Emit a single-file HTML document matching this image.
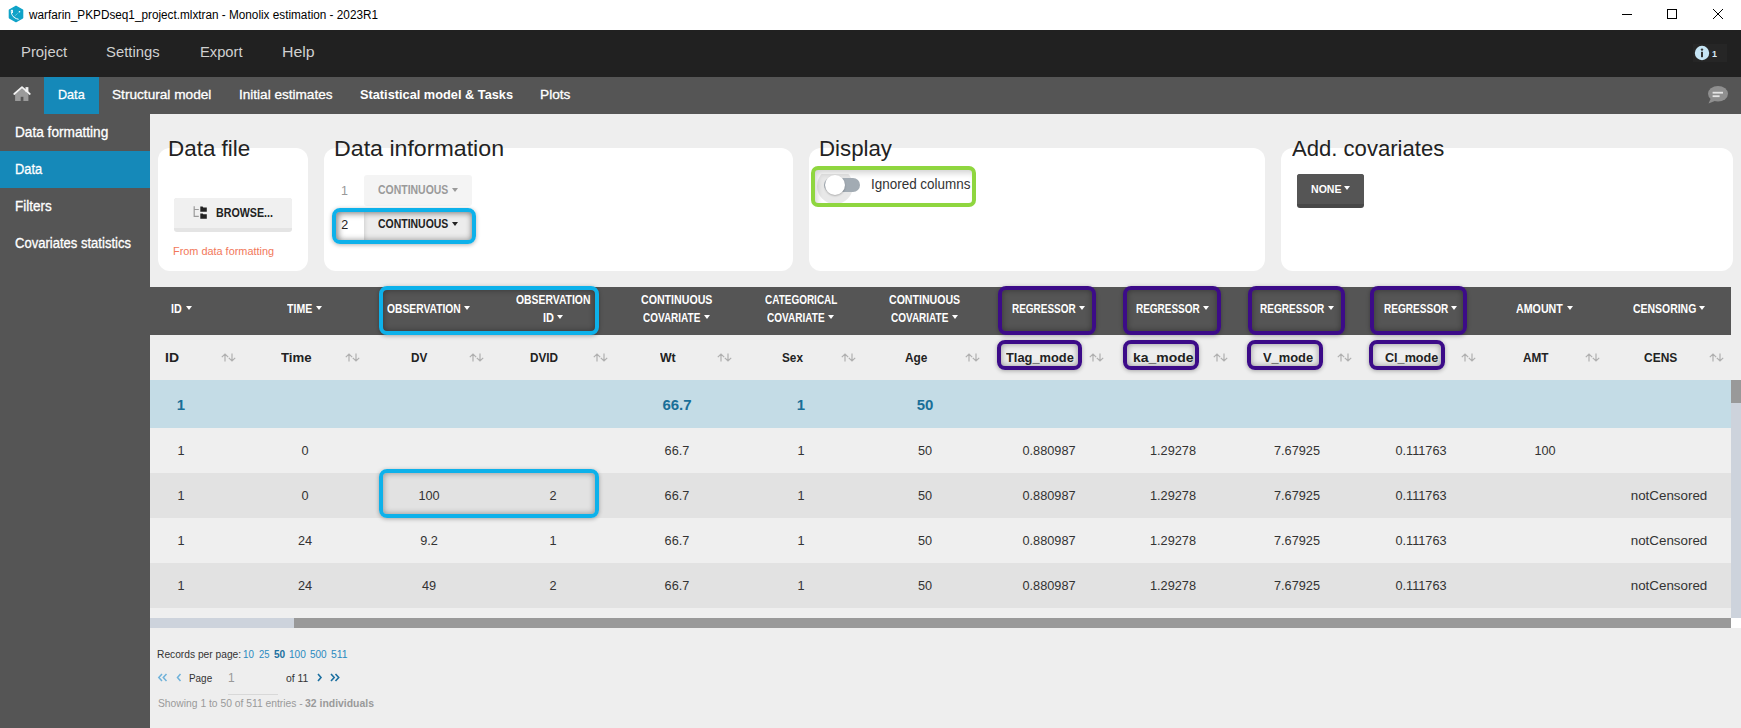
<!DOCTYPE html>
<html><head><meta charset="utf-8">
<style>
*{margin:0;padding:0;box-sizing:border-box}
html,body{width:1741px;height:728px;overflow:hidden;background:#eeeeee;font-family:"Liberation Sans",sans-serif}
.a{position:absolute}
.t{position:absolute;white-space:nowrap;line-height:1;transform-origin:0 0}
.card{position:absolute;background:#fff;border-radius:12px}
.car{position:absolute;width:0;height:0;border-left:3.5px solid transparent;border-right:3.5px solid transparent;border-top:4px solid #fff}
.sort{position:absolute;width:15px;height:9px}
.bx{position:absolute;border-radius:8px}
</style></head><body>
<!-- title bar -->
<div class="a" style="left:0;top:0;width:1741px;height:30px;background:#fff"></div>
<svg class="a" style="left:8px;top:5px" width="17" height="18" viewBox="0 0 17 18">
 <polygon points="8,1.3 14.6,5 14.6,12.8 8,16.6 1.4,12.8 1.4,5" fill="#10a3c8" stroke="#10a3c8" stroke-width="1.4" stroke-linejoin="round"/>
 <path d="M3.3,5.3 C3,9 4.6,13 10.6,14.3" stroke="#fff" stroke-width="1" fill="none"/>
 <path d="M3.1,5.5 L4.3,5 L4.5,8" stroke="#fff" stroke-width="1" fill="none"/>
 <path d="M5.6,12.2 L10.8,7.3" stroke="#d5f0f8" stroke-width="0.6" stroke-dasharray="1,0.8" fill="none"/>
 <circle cx="11.5" cy="6.7" r="0.8" fill="#fff"/>
</svg>
<div class="a" style="left:1622px;top:14px;width:10px;height:1px;background:#000"></div>
<div class="a" style="left:1667px;top:9px;width:10px;height:10px;border:1px solid #000"></div>
<svg class="a" style="left:1712px;top:8px" width="12" height="12" viewBox="0 0 12 12"><path d="M1,1 L11,11 M11,1 L1,11" stroke="#000" stroke-width="1"/></svg>

<!-- menu -->
<div class="a" style="left:0;top:30px;width:1741px;height:47px;background:#212121"></div>
<div class="a" style="left:1693px;top:44px;width:34px;height:18px;background:#262626"></div>
<svg class="a" style="left:1694px;top:45px" width="16" height="16" viewBox="0 0 16 16">
 <circle cx="8" cy="8" r="7.2" fill="#c6e5f5"/>
 <circle cx="8" cy="4.6" r="1.2" fill="#333"/>
 <rect x="7" y="6.8" width="2" height="5.4" fill="#333"/>
</svg>

<!-- tabs -->
<div class="a" style="left:0;top:77px;width:1741px;height:37px;background:#555555"></div>
<div class="a" style="left:44px;top:77px;width:55px;height:37px;background:#1589b9"></div>
<svg class="a" style="left:13px;top:86px" width="18" height="16" viewBox="0 0 18 16">
 <polygon points="2.1,8 9,1.6 15.4,8 15.4,14.9 2.1,14.9" fill="#9a9a9a"/>
 <rect x="7.7" y="10.8" width="2.7" height="4.1" fill="#555"/>
 <rect x="12.5" y="1.1" width="2.9" height="5" fill="#f0f0f0"/>
 <path d="M1.2,8 L9,1.2 L16.8,8" stroke="#f4f4f4" stroke-width="1.7" fill="none" stroke-linecap="round" stroke-linejoin="round"/>
</svg>
<svg class="a" style="left:1707px;top:85px" width="22" height="20" viewBox="0 0 22 20">
 <ellipse cx="11" cy="8.8" rx="10" ry="7.8" fill="#8f8f8f"/>
 <path d="M4,13 L1.5,18.5 L9,15.5 Z" fill="#8f8f8f"/>
 <rect x="5.6" y="6.8" width="10.4" height="1.8" fill="#e6e6e6"/>
 <rect x="5.6" y="10.3" width="7" height="1.8" fill="#e6e6e6"/>
</svg>

<!-- sidebar -->
<div class="a" style="left:0;top:114px;width:150px;height:614px;background:#555555"></div>
<div class="a" style="left:0;top:151px;width:150px;height:37px;background:#1589b9"></div>

<!-- cards -->
<div class="card" style="left:158px;top:148px;width:150px;height:123px"></div>
<div class="card" style="left:324px;top:148px;width:469px;height:123px"></div>
<div class="card" style="left:809px;top:148px;width:456px;height:123px"></div>
<div class="card" style="left:1281px;top:148px;width:452px;height:123px"></div>

<!-- browse button -->
<div class="a" style="left:174px;top:198px;width:118px;height:34px;background:#e4e4e4;border-radius:3px"></div>
<div class="a" style="left:174px;top:198px;width:118px;height:30px;background:#f0f0f0;border-radius:3px 3px 0 0"></div>
<svg class="a" style="left:192px;top:205px" width="16" height="15" viewBox="0 0 16 15">
 <path d="M2.2,1.2 V11.3 H6.8 M2.2,4.5 H6.8" stroke="#9a9a9a" stroke-width="1.2" fill="none"/>
 <path d="M8.3,1.6 H10.6 L11.3,2.4 H14.8 V6.8 H8.3 Z" fill="#222"/>
 <path d="M8.3,8.4 H10.6 L11.3,9.2 H14.8 V13.7 H8.3 Z" fill="#222"/>
</svg>

<!-- data information dropdowns -->
<div class="a" style="left:364px;top:175px;width:108px;height:31px;background:#f4f4f4;border-radius:3px"></div>
<div class="car" style="left:452px;top:188px;border-top-color:#9a9a9a"></div>
<div class="a" style="left:336px;top:211px;width:136px;height:30px;background:#fff;box-shadow:inset 3px 3px 6px rgba(0,0,0,0.25)"></div>
<div class="a" style="left:364px;top:211px;width:108px;height:30px;background:#ececec;box-shadow:inset 0 3px 5px rgba(0,0,0,0.18)"></div>
<div class="car" style="left:452px;top:222px;border-top-color:#222"></div>


<!-- display toggle -->
<div class="a" style="left:814px;top:169px;width:159px;height:35px;background:#fff;box-shadow:inset 3px 4px 6px rgba(0,0,0,0.18)"></div>
<div class="a" style="left:815px;top:174px;width:60px;height:30px;overflow:hidden"><div class="a" style="left:2px;top:-6px;width:36px;height:36px;border-radius:50%;background:rgba(0,0,0,0.09)"></div></div>
<div class="a" style="left:824px;top:178px;width:36px;height:14px;border-radius:7px;background:#a2abb3"></div>
<div class="a" style="left:825px;top:175px;width:20px;height:20px;border-radius:50%;background:#fff;box-shadow:0 1px 2px rgba(0,0,0,0.25)"></div>
<div class="bx" style="left:811px;top:166px;width:165px;height:41px;border:4px solid #8fd63f;border-radius:7px"></div>

<!-- NONE button -->
<div class="a" style="left:1297px;top:174px;width:67px;height:34px;background:#484848;border-radius:3px"></div>
<div class="a" style="left:1297px;top:174px;width:67px;height:30px;background:#555;border-radius:3px 3px 0 0"></div>
<div class="car" style="left:1344px;top:186px"></div>

<!-- table -->
<div class="a" style="left:150px;top:287px;width:1581px;height:48px;background:#555"></div>
<div class="a" style="left:150px;top:335px;width:1581px;height:45px;background:#eeeeee"></div>
<div class="a" style="left:150px;top:380px;width:1581px;height:48px;background:#c4dce6"></div>
<div class="a" style="left:150px;top:428px;width:1581px;height:45px;background:#efefef"></div>
<div class="a" style="left:150px;top:473px;width:1581px;height:45px;background:#e2e2e2"></div>
<div class="a" style="left:150px;top:518px;width:1581px;height:45px;background:#efefef"></div>
<div class="a" style="left:150px;top:563px;width:1581px;height:45px;background:#e2e2e2"></div>
<div class="a" style="left:150px;top:608px;width:1581px;height:10px;background:#efefef"></div>
<div class="a" style="left:150px;top:618px;width:144px;height:10px;background:#cdd3dc"></div>
<div class="a" style="left:294px;top:618px;width:1437px;height:10px;background:#999"></div>
<div class="a" style="left:1731px;top:380px;width:10px;height:238px;background:#cdd3dc"></div>
<div class="a" style="left:1731px;top:380px;width:10px;height:23px;background:#999"></div>
<div class="a" style="left:1731px;top:618px;width:10px;height:10px;background:#fff"></div>

<div class="car" style="left:185.6px;top:306px"></div>
<div class="car" style="left:316px;top:306px"></div>
<div class="car" style="left:464px;top:306px"></div>
<div class="car" style="left:557.4px;top:315px"></div>
<div class="car" style="left:704.4px;top:315px"></div>
<div class="car" style="left:828px;top:315px"></div>
<div class="car" style="left:952px;top:315px"></div>
<div class="car" style="left:1079px;top:306px"></div>
<div class="car" style="left:1203px;top:306px"></div>
<div class="car" style="left:1327.5px;top:306px"></div>
<div class="car" style="left:1451px;top:306px"></div>
<div class="car" style="left:1567px;top:306px"></div>
<div class="car" style="left:1699px;top:306px"></div>
<svg class="sort" style="left:220.5px;top:353px" viewBox="0 0 15 9"><path d="M4,8.5 V1 M0.8,4.2 L4,1 L7.2,4.2 M11,0.5 V8 M7.8,4.8 L11,8 L14.2,4.8" stroke="#b0b0b0" stroke-width="1.2" fill="none"/></svg>
<svg class="sort" style="left:344.5px;top:353px" viewBox="0 0 15 9"><path d="M4,8.5 V1 M0.8,4.2 L4,1 L7.2,4.2 M11,0.5 V8 M7.8,4.8 L11,8 L14.2,4.8" stroke="#b0b0b0" stroke-width="1.2" fill="none"/></svg>
<svg class="sort" style="left:468.5px;top:353px" viewBox="0 0 15 9"><path d="M4,8.5 V1 M0.8,4.2 L4,1 L7.2,4.2 M11,0.5 V8 M7.8,4.8 L11,8 L14.2,4.8" stroke="#b0b0b0" stroke-width="1.2" fill="none"/></svg>
<svg class="sort" style="left:592.5px;top:353px" viewBox="0 0 15 9"><path d="M4,8.5 V1 M0.8,4.2 L4,1 L7.2,4.2 M11,0.5 V8 M7.8,4.8 L11,8 L14.2,4.8" stroke="#b0b0b0" stroke-width="1.2" fill="none"/></svg>
<svg class="sort" style="left:716.5px;top:353px" viewBox="0 0 15 9"><path d="M4,8.5 V1 M0.8,4.2 L4,1 L7.2,4.2 M11,0.5 V8 M7.8,4.8 L11,8 L14.2,4.8" stroke="#b0b0b0" stroke-width="1.2" fill="none"/></svg>
<svg class="sort" style="left:840.5px;top:353px" viewBox="0 0 15 9"><path d="M4,8.5 V1 M0.8,4.2 L4,1 L7.2,4.2 M11,0.5 V8 M7.8,4.8 L11,8 L14.2,4.8" stroke="#b0b0b0" stroke-width="1.2" fill="none"/></svg>
<svg class="sort" style="left:964.5px;top:353px" viewBox="0 0 15 9"><path d="M4,8.5 V1 M0.8,4.2 L4,1 L7.2,4.2 M11,0.5 V8 M7.8,4.8 L11,8 L14.2,4.8" stroke="#b0b0b0" stroke-width="1.2" fill="none"/></svg>
<svg class="sort" style="left:1088.5px;top:353px" viewBox="0 0 15 9"><path d="M4,8.5 V1 M0.8,4.2 L4,1 L7.2,4.2 M11,0.5 V8 M7.8,4.8 L11,8 L14.2,4.8" stroke="#b0b0b0" stroke-width="1.2" fill="none"/></svg>
<svg class="sort" style="left:1212.5px;top:353px" viewBox="0 0 15 9"><path d="M4,8.5 V1 M0.8,4.2 L4,1 L7.2,4.2 M11,0.5 V8 M7.8,4.8 L11,8 L14.2,4.8" stroke="#b0b0b0" stroke-width="1.2" fill="none"/></svg>
<svg class="sort" style="left:1336.5px;top:353px" viewBox="0 0 15 9"><path d="M4,8.5 V1 M0.8,4.2 L4,1 L7.2,4.2 M11,0.5 V8 M7.8,4.8 L11,8 L14.2,4.8" stroke="#b0b0b0" stroke-width="1.2" fill="none"/></svg>
<svg class="sort" style="left:1460.5px;top:353px" viewBox="0 0 15 9"><path d="M4,8.5 V1 M0.8,4.2 L4,1 L7.2,4.2 M11,0.5 V8 M7.8,4.8 L11,8 L14.2,4.8" stroke="#b0b0b0" stroke-width="1.2" fill="none"/></svg>
<svg class="sort" style="left:1584.5px;top:353px" viewBox="0 0 15 9"><path d="M4,8.5 V1 M0.8,4.2 L4,1 L7.2,4.2 M11,0.5 V8 M7.8,4.8 L11,8 L14.2,4.8" stroke="#b0b0b0" stroke-width="1.2" fill="none"/></svg>
<svg class="sort" style="left:1708.5px;top:353px" viewBox="0 0 15 9"><path d="M4,8.5 V1 M0.8,4.2 L4,1 L7.2,4.2 M11,0.5 V8 M7.8,4.8 L11,8 L14.2,4.8" stroke="#b0b0b0" stroke-width="1.2" fill="none"/></svg>
<div class="bx" style="left:332px;top:208px;width:144px;height:36px;border:4px solid #0db1ea;box-shadow:inset 0 0 6px rgba(0,0,0,0.38),0 1px 4px rgba(0,0,0,0.3);"></div>
<div class="bx" style="left:379px;top:286px;width:220px;height:49px;border:4px solid #0db1ea;box-shadow:inset 0 0 6px rgba(0,0,0,0.38),0 1px 4px rgba(0,0,0,0.3);"></div>
<div class="bx" style="left:379px;top:469px;width:220px;height:49px;border:4px solid #0db1ea;box-shadow:inset 0 0 6px rgba(0,0,0,0.38),0 1px 4px rgba(0,0,0,0.3);"></div>
<div class="bx" style="left:998px;top:286px;width:98px;height:49px;border:4px solid #3c0b88;box-shadow:inset 0 0 6px rgba(0,0,0,0.38),0 1px 4px rgba(0,0,0,0.3);"></div>
<div class="bx" style="left:1123px;top:286px;width:98px;height:49px;border:4px solid #3c0b88;box-shadow:inset 0 0 6px rgba(0,0,0,0.38),0 1px 4px rgba(0,0,0,0.3);"></div>
<div class="bx" style="left:1248px;top:286px;width:97px;height:49px;border:4px solid #3c0b88;box-shadow:inset 0 0 6px rgba(0,0,0,0.38),0 1px 4px rgba(0,0,0,0.3);"></div>
<div class="bx" style="left:1370px;top:286px;width:97px;height:49px;border:4px solid #3c0b88;box-shadow:inset 0 0 6px rgba(0,0,0,0.38),0 1px 4px rgba(0,0,0,0.3);"></div>
<div class="bx" style="left:997px;top:340px;width:85px;height:30px;border:4px solid #3c0b88;box-shadow:inset 0 0 6px rgba(0,0,0,0.38),0 1px 4px rgba(0,0,0,0.3);"></div>
<div class="bx" style="left:1123px;top:340px;width:76px;height:30px;border:4px solid #3c0b88;box-shadow:inset 0 0 6px rgba(0,0,0,0.38),0 1px 4px rgba(0,0,0,0.3);"></div>
<div class="bx" style="left:1247px;top:340px;width:76px;height:30px;border:4px solid #3c0b88;box-shadow:inset 0 0 6px rgba(0,0,0,0.38),0 1px 4px rgba(0,0,0,0.3);"></div>
<div class="bx" style="left:1369px;top:340px;width:76px;height:30px;border:4px solid #3c0b88;box-shadow:inset 0 0 6px rgba(0,0,0,0.38),0 1px 4px rgba(0,0,0,0.3);"></div>

<!-- pagination -->
<div class="a" style="left:228px;top:694px;width:50px;height:1px;background:#d8d8d8"></div>
<svg class="a" style="left:157px;top:672px" width="190" height="12" viewBox="0 0 190 12">
 <path d="M5,2 L1.8,5.5 L5,9 M9.5,2 L6.3,5.5 L9.5,9" stroke="#6fb2da" stroke-width="1.5" fill="none"/>
 <path d="M23.5,2 L20.5,5.5 L23.5,9" stroke="#6fb2da" stroke-width="1.5" fill="none"/>
 <path d="M161,2 L164,5.5 L161,9" stroke="#1b6fa0" stroke-width="1.6" fill="none"/>
 <path d="M174,2 L177.2,5.5 L174,9 M178.5,2 L181.7,5.5 L178.5,9" stroke="#1b6fa0" stroke-width="1.6" fill="none"/>
</svg>

<div class="t" style="font-size:12.5px;font-weight:normal;color:#000;top:8.02px;left:29.00px;transform:scaleX(0.9407);margin-top:1.00px">warfarin_PKPDseq1_project.mlxtran - Monolix estimation - 2023R1</div>
<div class="t" style="font-size:15px;font-weight:normal;color:#d0d0d0;top:44.30px;left:20.51px;transform:scaleX(0.9891);margin-top:-0.30px">Project</div>
<div class="t" style="font-size:15px;font-weight:normal;color:#d0d0d0;top:44.30px;left:106.41px;transform:scaleX(0.9887);margin-top:-0.30px">Settings</div>
<div class="t" style="font-size:15px;font-weight:normal;color:#d0d0d0;top:44.30px;left:199.62px;transform:scaleX(0.9814);margin-top:-0.30px">Export</div>
<div class="t" style="font-size:15px;font-weight:normal;color:#d0d0d0;top:44.30px;left:281.94px;transform:scaleX(1.0600);margin-top:-0.30px">Help</div>
<div class="t" style="font-size:13.7px;font-weight:normal;color:#fff;top:87.70px;left:57.68px;transform:scaleX(0.9214);-webkit-text-stroke:0.3px #fff;margin-top:0.33px">Data</div>
<div class="t" style="font-size:13.7px;font-weight:normal;color:#fff;top:87.70px;left:112.30px;transform:scaleX(0.9969);-webkit-text-stroke:0.3px #fff;margin-top:0.33px">Structural model</div>
<div class="t" style="font-size:13.7px;font-weight:normal;color:#fff;top:87.70px;left:238.81px;transform:scaleX(0.9914);-webkit-text-stroke:0.3px #fff;margin-top:0.33px">Initial estimates</div>
<div class="t" style="font-size:13.7px;font-weight:bold;color:#fff;top:87.70px;left:360.00px;transform:scaleX(0.9329);margin-top:0.33px">Statistical model &amp; Tasks</div>
<div class="t" style="font-size:13.7px;font-weight:normal;color:#fff;top:87.70px;left:540.00px;-webkit-text-stroke:0.3px #fff;margin-top:0.33px">Plots</div>
<div class="t" style="font-size:14px;font-weight:normal;color:#fff;top:125.55px;left:15.43px;transform:scaleX(0.9745);-webkit-text-stroke:0.3px #fff;margin-top:-0.55px">Data formatting</div>
<div class="t" style="font-size:14px;font-weight:normal;color:#fff;top:162.55px;left:15.48px;transform:scaleX(0.9172);-webkit-text-stroke:0.3px #fff;margin-top:-0.55px">Data</div>
<div class="t" style="font-size:14px;font-weight:normal;color:#fff;top:199.55px;left:15.44px;transform:scaleX(0.9622);-webkit-text-stroke:0.3px #fff;margin-top:-0.55px">Filters</div>
<div class="t" style="font-size:14px;font-weight:normal;color:#fff;top:236.55px;left:15.47px;transform:scaleX(0.9317);-webkit-text-stroke:0.3px #fff;margin-top:-0.55px">Covariates statistics</div>
<div class="t" style="font-size:22px;font-weight:normal;color:#222;top:137.38px;left:167.98px;transform:scaleX(1.0190);margin-top:0.64px">Data file</div>
<div class="t" style="font-size:22px;font-weight:normal;color:#222;top:137.58px;left:334.35px;transform:scaleX(1.0535);margin-top:0.44px">Data information</div>
<div class="t" style="font-size:22px;font-weight:normal;color:#222;top:137.38px;left:818.99px;transform:scaleX(1.0113);margin-top:0.64px">Display</div>
<div class="t" style="font-size:22px;font-weight:normal;color:#222;top:137.18px;left:1292.00px;transform:scaleX(1.0040);margin-top:0.83px">Add. covariates</div>
<div class="t" style="font-size:12px;font-weight:bold;color:#222;top:206.94px;left:215.50px;transform:scaleX(0.8906);margin-top:0.08px">BROWSE...</div>
<div class="t" style="font-size:10.5px;font-weight:normal;color:#f2775a;top:245.71px;left:172.96px;transform:scaleX(1.0365);margin-top:0.30px">From data formatting</div>
<div class="t" style="font-size:12.5px;font-weight:normal;color:#999;top:184.32px;left:341.00px;margin-top:0.69px">1</div>
<div class="t" style="font-size:12px;font-weight:bold;color:#9a9a9a;top:184.14px;left:377.70px;transform:scaleX(0.8716);margin-top:-0.14px">CONTINUOUS</div>
<div class="t" style="font-size:12.5px;font-weight:normal;color:#222;top:218.32px;left:341.20px;margin-top:0.69px">2</div>
<div class="t" style="font-size:12px;font-weight:bold;color:#222;top:218.04px;left:377.70px;transform:scaleX(0.8716);margin-top:-0.05px">CONTINUOUS</div>
<div class="t" style="font-size:14px;font-weight:normal;color:#333;top:177.25px;left:871.04px;transform:scaleX(0.9608);margin-top:-0.25px">Ignored columns</div>
<div class="t" style="font-size:11.5px;font-weight:bold;color:#fff;top:183.27px;left:1311.00px;transform:scaleX(0.9182);margin-top:0.75px">NONE</div>
<div class="t" style="font-size:9px;font-weight:bold;color:#d8ecf8;top:49.38px;left:1712.00px;margin-top:0.64px">1</div>
<div class="t" style="font-size:12px;font-weight:bold;color:#fff;top:303.14px;left:170.70px;transform:scaleX(0.8917);margin-top:-0.14px">ID</div>
<div class="t" style="font-size:12px;font-weight:bold;color:#fff;top:303.14px;left:287.20px;transform:scaleX(0.8793);margin-top:-0.14px">TIME</div>
<div class="t" style="font-size:12px;font-weight:bold;color:#fff;top:303.14px;left:387.00px;transform:scaleX(0.8570);margin-top:-0.14px">OBSERVATION</div>
<div class="t" style="font-size:12px;font-weight:bold;color:#fff;top:303.14px;left:1012.00px;transform:scaleX(0.8312);margin-top:-0.14px">REGRESSOR</div>
<div class="t" style="font-size:12px;font-weight:bold;color:#fff;top:303.14px;left:1136.00px;transform:scaleX(0.8312);margin-top:-0.14px">REGRESSOR</div>
<div class="t" style="font-size:12px;font-weight:bold;color:#fff;top:303.14px;left:1259.90px;transform:scaleX(0.8377);margin-top:-0.14px">REGRESSOR</div>
<div class="t" style="font-size:12px;font-weight:bold;color:#fff;top:303.14px;left:1383.80px;transform:scaleX(0.8377);margin-top:-0.14px">REGRESSOR</div>
<div class="t" style="font-size:12px;font-weight:bold;color:#fff;top:303.14px;left:1516.40px;transform:scaleX(0.8887);margin-top:-0.14px">AMOUNT</div>
<div class="t" style="font-size:12px;font-weight:bold;color:#fff;top:303.14px;left:1632.70px;transform:scaleX(0.8708);margin-top:-0.14px">CENSORING</div>
<div class="t" style="font-size:12px;font-weight:bold;color:#fff;top:294.04px;left:515.80px;transform:scaleX(0.8651);margin-top:-0.05px">OBSERVATION</div>
<div class="t" style="font-size:12px;font-weight:bold;color:#fff;top:312.04px;left:542.60px;transform:scaleX(0.9167);margin-top:-0.05px">ID</div>
<div class="t" style="font-size:12px;font-weight:bold;color:#fff;top:294.04px;left:641.30px;transform:scaleX(0.8852);margin-top:-0.05px">CONTINUOUS</div>
<div class="t" style="font-size:12px;font-weight:bold;color:#fff;top:312.04px;left:643.20px;transform:scaleX(0.8319);margin-top:-0.05px">COVARIATE</div>
<div class="t" style="font-size:12px;font-weight:bold;color:#fff;top:294.04px;left:764.70px;transform:scaleX(0.8310);margin-top:-0.05px">CATEGORICAL</div>
<div class="t" style="font-size:12px;font-weight:bold;color:#fff;top:312.04px;left:767.00px;transform:scaleX(0.8362);margin-top:-0.05px">COVARIATE</div>
<div class="t" style="font-size:12px;font-weight:bold;color:#fff;top:294.04px;left:889.40px;transform:scaleX(0.8815);margin-top:-0.05px">CONTINUOUS</div>
<div class="t" style="font-size:12px;font-weight:bold;color:#fff;top:312.04px;left:891.20px;transform:scaleX(0.8319);margin-top:-0.05px">COVARIATE</div>
<div class="t" style="font-size:13.5px;font-weight:bold;color:#222;top:350.07px;left:164.87px;transform:scaleX(1.0333);margin-top:0.94px">ID</div>
<div class="t" style="font-size:13.5px;font-weight:bold;color:#222;top:350.07px;left:281.00px;transform:scaleX(0.9774);margin-top:0.94px">Time</div>
<div class="t" style="font-size:13.5px;font-weight:bold;color:#222;top:350.07px;left:411.43px;transform:scaleX(0.8722);margin-top:0.94px">DV</div>
<div class="t" style="font-size:13.5px;font-weight:bold;color:#222;top:350.07px;left:529.63px;transform:scaleX(0.8710);margin-top:0.94px">DVID</div>
<div class="t" style="font-size:13.5px;font-weight:bold;color:#222;top:350.07px;left:660.30px;transform:scaleX(0.9118);margin-top:0.94px">Wt</div>
<div class="t" style="font-size:13.5px;font-weight:bold;color:#222;top:350.07px;left:781.70px;transform:scaleX(0.8708);margin-top:0.94px">Sex</div>
<div class="t" style="font-size:13.5px;font-weight:bold;color:#222;top:350.07px;left:905.00px;transform:scaleX(0.8800);margin-top:0.94px">Age</div>
<div class="t" style="font-size:13.5px;font-weight:bold;color:#222;top:350.07px;left:1006.40px;transform:scaleX(0.9521);margin-top:0.94px">Tlag_mode</div>
<div class="t" style="font-size:13.5px;font-weight:bold;color:#222;top:350.07px;left:1133.46px;transform:scaleX(1.0351);margin-top:0.94px">ka_mode</div>
<div class="t" style="font-size:13.5px;font-weight:bold;color:#222;top:350.07px;left:1263.00px;transform:scaleX(0.9538);margin-top:0.94px">V_mode</div>
<div class="t" style="font-size:13.5px;font-weight:bold;color:#222;top:350.07px;left:1385.30px;transform:scaleX(0.9351);margin-top:0.94px">Cl_mode</div>
<div class="t" style="font-size:13.5px;font-weight:bold;color:#222;top:350.07px;left:1522.90px;transform:scaleX(0.8733);margin-top:0.94px">AMT</div>
<div class="t" style="font-size:13.5px;font-weight:bold;color:#222;top:350.07px;left:1643.50px;transform:scaleX(0.8865);margin-top:0.94px">CENS</div>
<div class="t" style="font-size:13.2px;font-weight:normal;color:#333;top:444.13px;left:181.00px;transform:translateX(-50%) scaleX(0.9650);transform-origin:50% 0;margin-top:-0.14px">1</div>
<div class="t" style="font-size:13.2px;font-weight:normal;color:#333;top:444.13px;left:305.00px;transform:translateX(-50%) scaleX(0.9650);transform-origin:50% 0;margin-top:-0.14px">0</div>
<div class="t" style="font-size:13.2px;font-weight:normal;color:#333;top:444.13px;left:677.00px;transform:translateX(-50%) scaleX(0.9650);transform-origin:50% 0;margin-top:-0.14px">66.7</div>
<div class="t" style="font-size:13.2px;font-weight:normal;color:#333;top:444.13px;left:801.00px;transform:translateX(-50%) scaleX(0.9650);transform-origin:50% 0;margin-top:-0.14px">1</div>
<div class="t" style="font-size:13.2px;font-weight:normal;color:#333;top:444.13px;left:925.00px;transform:translateX(-50%) scaleX(0.9650);transform-origin:50% 0;margin-top:-0.14px">50</div>
<div class="t" style="font-size:13.2px;font-weight:normal;color:#333;top:444.13px;left:1049.00px;transform:translateX(-50%) scaleX(0.9650);transform-origin:50% 0;margin-top:-0.14px">0.880987</div>
<div class="t" style="font-size:13.2px;font-weight:normal;color:#333;top:444.13px;left:1173.00px;transform:translateX(-50%) scaleX(0.9650);transform-origin:50% 0;margin-top:-0.14px">1.29278</div>
<div class="t" style="font-size:13.2px;font-weight:normal;color:#333;top:444.13px;left:1297.00px;transform:translateX(-50%) scaleX(0.9650);transform-origin:50% 0;margin-top:-0.14px">7.67925</div>
<div class="t" style="font-size:13.2px;font-weight:normal;color:#333;top:444.13px;left:1421.00px;transform:translateX(-50%) scaleX(0.9650);transform-origin:50% 0;margin-top:-0.14px">0.111763</div>
<div class="t" style="font-size:13.2px;font-weight:normal;color:#333;top:444.13px;left:1545.00px;transform:translateX(-50%) scaleX(0.9650);transform-origin:50% 0;margin-top:-0.14px">100</div>
<div class="t" style="font-size:13.2px;font-weight:normal;color:#333;top:489.13px;left:181.00px;transform:translateX(-50%) scaleX(0.9650);transform-origin:50% 0;margin-top:-0.14px">1</div>
<div class="t" style="font-size:13.2px;font-weight:normal;color:#333;top:489.13px;left:305.00px;transform:translateX(-50%) scaleX(0.9650);transform-origin:50% 0;margin-top:-0.14px">0</div>
<div class="t" style="font-size:13.2px;font-weight:normal;color:#333;top:489.13px;left:429.00px;transform:translateX(-50%) scaleX(0.9650);transform-origin:50% 0;margin-top:-0.14px">100</div>
<div class="t" style="font-size:13.2px;font-weight:normal;color:#333;top:489.13px;left:553.00px;transform:translateX(-50%) scaleX(0.9650);transform-origin:50% 0;margin-top:-0.14px">2</div>
<div class="t" style="font-size:13.2px;font-weight:normal;color:#333;top:489.13px;left:677.00px;transform:translateX(-50%) scaleX(0.9650);transform-origin:50% 0;margin-top:-0.14px">66.7</div>
<div class="t" style="font-size:13.2px;font-weight:normal;color:#333;top:489.13px;left:801.00px;transform:translateX(-50%) scaleX(0.9650);transform-origin:50% 0;margin-top:-0.14px">1</div>
<div class="t" style="font-size:13.2px;font-weight:normal;color:#333;top:489.13px;left:925.00px;transform:translateX(-50%) scaleX(0.9650);transform-origin:50% 0;margin-top:-0.14px">50</div>
<div class="t" style="font-size:13.2px;font-weight:normal;color:#333;top:489.13px;left:1049.00px;transform:translateX(-50%) scaleX(0.9650);transform-origin:50% 0;margin-top:-0.14px">0.880987</div>
<div class="t" style="font-size:13.2px;font-weight:normal;color:#333;top:489.13px;left:1173.00px;transform:translateX(-50%) scaleX(0.9650);transform-origin:50% 0;margin-top:-0.14px">1.29278</div>
<div class="t" style="font-size:13.2px;font-weight:normal;color:#333;top:489.13px;left:1297.00px;transform:translateX(-50%) scaleX(0.9650);transform-origin:50% 0;margin-top:-0.14px">7.67925</div>
<div class="t" style="font-size:13.2px;font-weight:normal;color:#333;top:489.13px;left:1421.00px;transform:translateX(-50%) scaleX(0.9650);transform-origin:50% 0;margin-top:-0.14px">0.111763</div>
<div class="t" style="font-size:13.2px;font-weight:normal;color:#333;top:489.13px;left:1669.00px;transform:translateX(-50%) scaleX(1.0135);transform-origin:50% 0;margin-top:-0.14px">notCensored</div>
<div class="t" style="font-size:13.2px;font-weight:normal;color:#333;top:534.13px;left:181.00px;transform:translateX(-50%) scaleX(0.9650);transform-origin:50% 0;margin-top:-0.14px">1</div>
<div class="t" style="font-size:13.2px;font-weight:normal;color:#333;top:534.13px;left:305.00px;transform:translateX(-50%) scaleX(0.9650);transform-origin:50% 0;margin-top:-0.14px">24</div>
<div class="t" style="font-size:13.2px;font-weight:normal;color:#333;top:534.13px;left:429.00px;transform:translateX(-50%) scaleX(0.9650);transform-origin:50% 0;margin-top:-0.14px">9.2</div>
<div class="t" style="font-size:13.2px;font-weight:normal;color:#333;top:534.13px;left:553.00px;transform:translateX(-50%) scaleX(0.9650);transform-origin:50% 0;margin-top:-0.14px">1</div>
<div class="t" style="font-size:13.2px;font-weight:normal;color:#333;top:534.13px;left:677.00px;transform:translateX(-50%) scaleX(0.9650);transform-origin:50% 0;margin-top:-0.14px">66.7</div>
<div class="t" style="font-size:13.2px;font-weight:normal;color:#333;top:534.13px;left:801.00px;transform:translateX(-50%) scaleX(0.9650);transform-origin:50% 0;margin-top:-0.14px">1</div>
<div class="t" style="font-size:13.2px;font-weight:normal;color:#333;top:534.13px;left:925.00px;transform:translateX(-50%) scaleX(0.9650);transform-origin:50% 0;margin-top:-0.14px">50</div>
<div class="t" style="font-size:13.2px;font-weight:normal;color:#333;top:534.13px;left:1049.00px;transform:translateX(-50%) scaleX(0.9650);transform-origin:50% 0;margin-top:-0.14px">0.880987</div>
<div class="t" style="font-size:13.2px;font-weight:normal;color:#333;top:534.13px;left:1173.00px;transform:translateX(-50%) scaleX(0.9650);transform-origin:50% 0;margin-top:-0.14px">1.29278</div>
<div class="t" style="font-size:13.2px;font-weight:normal;color:#333;top:534.13px;left:1297.00px;transform:translateX(-50%) scaleX(0.9650);transform-origin:50% 0;margin-top:-0.14px">7.67925</div>
<div class="t" style="font-size:13.2px;font-weight:normal;color:#333;top:534.13px;left:1421.00px;transform:translateX(-50%) scaleX(0.9650);transform-origin:50% 0;margin-top:-0.14px">0.111763</div>
<div class="t" style="font-size:13.2px;font-weight:normal;color:#333;top:534.13px;left:1669.00px;transform:translateX(-50%) scaleX(1.0135);transform-origin:50% 0;margin-top:-0.14px">notCensored</div>
<div class="t" style="font-size:13.2px;font-weight:normal;color:#333;top:579.13px;left:181.00px;transform:translateX(-50%) scaleX(0.9650);transform-origin:50% 0;margin-top:-0.14px">1</div>
<div class="t" style="font-size:13.2px;font-weight:normal;color:#333;top:579.13px;left:305.00px;transform:translateX(-50%) scaleX(0.9650);transform-origin:50% 0;margin-top:-0.14px">24</div>
<div class="t" style="font-size:13.2px;font-weight:normal;color:#333;top:579.13px;left:429.00px;transform:translateX(-50%) scaleX(0.9650);transform-origin:50% 0;margin-top:-0.14px">49</div>
<div class="t" style="font-size:13.2px;font-weight:normal;color:#333;top:579.13px;left:553.00px;transform:translateX(-50%) scaleX(0.9650);transform-origin:50% 0;margin-top:-0.14px">2</div>
<div class="t" style="font-size:13.2px;font-weight:normal;color:#333;top:579.13px;left:677.00px;transform:translateX(-50%) scaleX(0.9650);transform-origin:50% 0;margin-top:-0.14px">66.7</div>
<div class="t" style="font-size:13.2px;font-weight:normal;color:#333;top:579.13px;left:801.00px;transform:translateX(-50%) scaleX(0.9650);transform-origin:50% 0;margin-top:-0.14px">1</div>
<div class="t" style="font-size:13.2px;font-weight:normal;color:#333;top:579.13px;left:925.00px;transform:translateX(-50%) scaleX(0.9650);transform-origin:50% 0;margin-top:-0.14px">50</div>
<div class="t" style="font-size:13.2px;font-weight:normal;color:#333;top:579.13px;left:1049.00px;transform:translateX(-50%) scaleX(0.9650);transform-origin:50% 0;margin-top:-0.14px">0.880987</div>
<div class="t" style="font-size:13.2px;font-weight:normal;color:#333;top:579.13px;left:1173.00px;transform:translateX(-50%) scaleX(0.9650);transform-origin:50% 0;margin-top:-0.14px">1.29278</div>
<div class="t" style="font-size:13.2px;font-weight:normal;color:#333;top:579.13px;left:1297.00px;transform:translateX(-50%) scaleX(0.9650);transform-origin:50% 0;margin-top:-0.14px">7.67925</div>
<div class="t" style="font-size:13.2px;font-weight:normal;color:#333;top:579.13px;left:1421.00px;transform:translateX(-50%) scaleX(0.9650);transform-origin:50% 0;margin-top:-0.14px">0.111763</div>
<div class="t" style="font-size:13.2px;font-weight:normal;color:#333;top:579.13px;left:1669.00px;transform:translateX(-50%) scaleX(1.0135);transform-origin:50% 0;margin-top:-0.14px">notCensored</div>
<div class="t" style="font-size:14px;font-weight:bold;color:#1a6f98;top:397.95px;left:181.00px;transform:translateX(-50%) scaleX(1.0700);transform-origin:50% 0;margin-top:0.08px">1</div>
<div class="t" style="font-size:14px;font-weight:bold;color:#1a6f98;top:397.95px;left:677.00px;transform:translateX(-50%) scaleX(1.0700);transform-origin:50% 0;margin-top:0.08px">66.7</div>
<div class="t" style="font-size:14px;font-weight:bold;color:#1a6f98;top:397.95px;left:801.00px;transform:translateX(-50%) scaleX(1.0700);transform-origin:50% 0;margin-top:0.08px">1</div>
<div class="t" style="font-size:14px;font-weight:bold;color:#1a6f98;top:397.95px;left:925.00px;transform:translateX(-50%) scaleX(1.0700);transform-origin:50% 0;margin-top:0.08px">50</div>
<div class="t" style="font-size:11.5px;font-weight:normal;color:#333;top:648.57px;left:157.31px;transform:scaleX(0.8892);margin-top:0.44px">Records per page:</div>
<div class="t" style="font-size:11.5px;font-weight:normal;color:#2a8ac0;top:648.57px;left:242.95px;transform:scaleX(0.8500);margin-top:0.44px">10</div>
<div class="t" style="font-size:11.5px;font-weight:normal;color:#2a8ac0;top:648.57px;left:258.50px;transform:scaleX(0.8231);margin-top:0.44px">25</div>
<div class="t" style="font-size:11.5px;font-weight:bold;color:#1b6fa0;top:648.57px;left:273.80px;transform:scaleX(0.8769);margin-top:0.44px">50</div>
<div class="t" style="font-size:11.5px;font-weight:normal;color:#2a8ac0;top:648.57px;left:289.12px;transform:scaleX(0.8778);margin-top:0.44px">100</div>
<div class="t" style="font-size:11.5px;font-weight:normal;color:#2a8ac0;top:648.57px;left:310.20px;transform:scaleX(0.8684);margin-top:0.44px">500</div>
<div class="t" style="font-size:11.5px;font-weight:normal;color:#2a8ac0;top:648.57px;left:330.90px;transform:scaleX(0.9056);margin-top:0.44px">511</div>
<div class="t" style="font-size:11.5px;font-weight:normal;color:#333;top:672.27px;left:188.74px;transform:scaleX(0.8615);margin-top:0.75px">Page</div>
<div class="t" style="font-size:12px;font-weight:normal;color:#999;top:672.34px;left:228.00px;margin-top:-0.33px">1</div>
<div class="t" style="font-size:11.5px;font-weight:normal;color:#333;top:672.27px;left:286.40px;transform:scaleX(0.9042);margin-top:0.75px">of 11</div>
<div class="t" style="font-size:11.5px;font-weight:normal;color:#9a9a9a;top:697.37px;left:158.20px;transform:scaleX(0.8963);margin-top:0.66px">Showing 1 to 50 of 511 entries -</div>
<div class="t" style="font-size:11.5px;font-weight:bold;color:#9a9a9a;top:697.37px;left:304.80px;transform:scaleX(0.9066);margin-top:0.66px">32 individuals</div>
</body></html>
